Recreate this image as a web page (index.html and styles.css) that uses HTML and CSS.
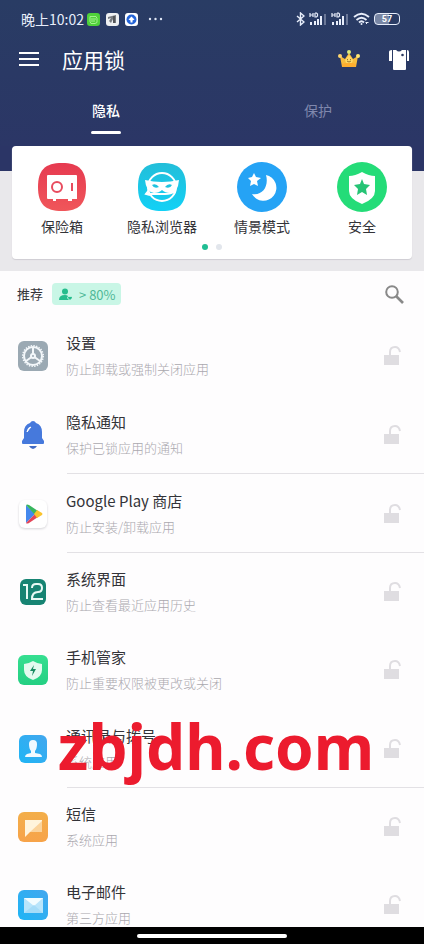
FILE: index.html
```html
<!DOCTYPE html>
<html lang="zh-CN">
<head>
  <meta charset="UTF-8" />
  <meta name="viewport" content="width=device-width, initial-scale=1.0"/>
  <title>应用锁</title>
  <link rel="stylesheet" href="styles.css">
</head>
<body>

  <header class="header">
    <div class="status-bar">
      <span class="time">晚上10:02</span>
      <div class="status-apps">
        <svg width="13" height="13" viewBox="0 0 13 13"><rect width="13" height="13" rx="3" fill="#4fd13a"/><path d="M3 3.500h6l1 2v4l-2 1H4l-1-2zM4 6h5M4 8h4" stroke="#a5f08f" fill="none"/></svg>
        <svg width="13" height="13" viewBox="0 0 13 13"><rect width="13" height="13" rx="3" fill="#eef0f2"/><path d="M2 4l8-2v8H7V6L5 10 3 8l2-3-3 1z" fill="#777b80"/><path d="M8 3v7" stroke="#333"/></svg>
        <svg width="13" height="13" viewBox="0 0 13 13"><rect width="13" height="13" rx="3" fill="#fff"/><circle cx="6.500" cy="6.500" r="5" fill="#2464d8"/><path d="M6.500 3.500l3 3-2 1v2h-2v-2l-2-1z" fill="#fff"/></svg>
      </div>
      <svg class="more" width="16" height="4" viewBox="0 0 16 4" fill="#dfe6f5"><circle cx="2" cy="2" r="1.200"/><circle cx="7.500" cy="2" r="1.200"/><circle cx="13" cy="2" r="1.200"/></svg>
      <div class="status-icons">
        <svg width="9" height="14" viewBox="0 0 9 14" fill="none" stroke="#e8eefb" stroke-width="1.400"><path d="M1 4l7 6-3.500 3V1L8 4l-7 6"/></svg>
        <svg width="18" height="14" viewBox="0 0 18 14"><g stroke="#e8eefb" stroke-width="1.200" fill="none"><path d="M1 1v4M1 3h3M4 1v4M6 1v4h1.500l1-1V2l-1-1H6"/></g><path d="M1 10h2v3H1zM5 9h2v4H5zM8 7h2v6H8zM11 4h2v9h-2z" fill="#e8eefb"/><path d="M15 2h2v11h-2z" fill="#6b7898"/></svg>
        <svg width="18" height="14" viewBox="0 0 18 14"><g stroke="#e8eefb" stroke-width="1.200" fill="none"><path d="M1 1v4M1 3h3M4 1v4M6 1v4h1.500l1-1V2l-1-1H6"/></g><path d="M1 10h2v3H1zM5 9h2v4H5zM8 7h2v6H8zM11 4h2v9h-2z" fill="#e8eefb"/><path d="M15 2h2v11h-2z" fill="#6b7898"/></svg>
        <svg width="17" height="14" viewBox="0 0 17 14" fill="none" stroke="#e8eefb" stroke-width="1.800"><path d="M1 5q7.500-6.500 15 0M3.500 8q5-4.500 10 0M6 10.500q2.500-2.500 5 0"/><circle cx="8.500" cy="12" r="1" fill="#e8eefb" stroke="none"/><path d="M13 12l2-2M12.500 10.500h3" stroke-width="1"/></svg>
        <span class="battery">57</span>
      </div>
    </div>

    <div class="toolbar">
      <button class="icon-btn" aria-label="菜单">
        <svg width="20" height="14" viewBox="0 0 20 14" stroke="#fff" stroke-width="2"><path d="M0 1h20M0 7h20M0 13h20"/></svg>
      </button>
      <h1>应用锁</h1>
      <button class="icon-btn" aria-label="高级版">
        <svg width="22" height="18" viewBox="0 0 22 18"><path d="M2 6l5 3 4-6 4 6 5-3-2 11H4z" fill="#f8bd3d"/><path d="M4 14q7-3 14 0l-.5 3h-13z" fill="#ffae2f"/><path d="M7 10l4-5 4 5-1 3H8z" fill="#ffd964"/><path d="M9 9l1 1M13 9l-1 1M9 11q2 2 4 0" stroke="#9a742e" fill="none"/><circle cx="11" cy="2" r="2" fill="#ddeb79"/><circle cx="2" cy="6" r="2" fill="#ffd66e"/><circle cx="20" cy="6" r="2" fill="#ffe873"/></svg>
      </button>
      <button class="icon-btn" aria-label="主题">
        <svg width="22" height="21" viewBox="0 0 22 21" fill="#fff"><path d="M5 1h3q3 3 6 0h4v19q0 1-1 1H6q-1 0-1-1zM1 3q0-2 3-2v11H1zM19 1q2 0 2 2v9h-2z"/><circle cx="14.500" cy="6" r="1.300" fill="#29375f"/></svg>
      </button>
    </div>

    <nav class="tabs">
      <button class="tab active">隐私</button>
      <button class="tab">保护</button>
    </nav>
  </header>

  <section class="features">
    <div class="card">
      <div class="feature-grid">
        <button class="feature">
          <svg width="50" height="50" viewBox="0 0 50 50"><defs><linearGradient id="red" x2="0" y2="1"><stop stop-color="#e63a50"/><stop offset="1" stop-color="#f0565a"/></linearGradient></defs><path d="M25 1C42 1 49 8 49 25S42 49 25 49 1 42 1 25 8 1 25 1z" fill="url(#red)"/><path d="M11 13h28q1 0 1 1v23h-5v2h-4v-2H19v2h-3v-2h-5q-1 0-1-1V14q0-1 1-1z" fill="#fff"/><circle cx="20" cy="25" r="5" fill="none" stroke="#e84b5e" stroke-width="2"/><path d="M35 21v8" stroke="#e84b5e" stroke-width="2"/></svg>
          <span>保险箱</span>
        </button>
        <button class="feature">
          <svg width="50" height="50" viewBox="0 0 50 50"><defs><linearGradient id="cyan" x2="0" y2="1"><stop stop-color="#23bed9"/><stop offset="1" stop-color="#12d1f6"/></linearGradient></defs><path d="M25 1C42 1 49 8 49 25S42 49 25 49 1 42 1 25 8 1 25 1z" fill="url(#cyan)"/><circle cx="25" cy="25" r="14" fill="none" stroke="#fff" stroke-width="2"/><path d="M8 18q17 4 34 0l-1 6q-2 6-8 7-5 0-8-3-3 3-8 3-8-1-9-13z" fill="#fff"/><path d="M15 23q4-2 7 2-5 2-7-2zM28 25q3-4 7-2-2 4-7 2z" fill="#20c2df"/><path d="M10 32h18q6 0 10-3M12 28l-3 4 4 1" fill="none" stroke="#fff" stroke-width="2"/></svg>
          <span>隐私浏览器</span>
        </button>
        <button class="feature">
          <svg width="50" height="50" viewBox="0 0 50 50"><circle cx="25" cy="25" r="25" fill="#25a3f5"/><path d="M29 13a13 13 0 1 1-14 19C26 34 32 24 29 13z" fill="#fff"/><path d="M17 11l2 4 5 1-4 3 1 5-4-2-4 2 1-5-3-3 4-1z" fill="#fff"/></svg>
          <span>情景模式</span>
        </button>
        <button class="feature">
          <svg width="50" height="50" viewBox="0 0 50 50"><circle cx="25" cy="25" r="25" fill="#24dc78"/><path d="M25 10q7 4 13 4v15q0 8-13 13-13-5-13-13V14q6 0 13-4z" fill="#fff"/><path d="M25 17l2 5 6 1-4 4 1 6-5-3-5 3 1-6-4-4 6-1z" fill="#26c475"/></svg>
          <span>安全</span>
        </button>
      </div>
      <div class="dots"><i class="dot on"></i><i class="dot"></i></div>
    </div>
  </section>

  <main>
    <div class="list-head">
      <h2>推荐</h2>
      <span class="badge">
        <svg width="14" height="13" viewBox="0 0 14 13" fill="#25bd8d"><circle cx="6" cy="3.500" r="3"/><path d="M0 12q0-5 6-5 2 0 3 1l-1 2 2 2z"/><path d="M11 12L9 10q0-2 2-1 2-1 2 1z"/></svg>
        &gt; 80%
      </span>
      <button class="icon-btn" aria-label="搜索">
        <svg width="19" height="19" viewBox="0 0 19 19" fill="none" stroke="#898989"><circle cx="7" cy="7" r="5.800" stroke-width="2"/><path d="M11 11l7 7" stroke-width="2.600"/></svg>
      </button>
    </div>

    <svg class="defs" width="0" height="0" aria-hidden="true">
      <symbol id="unlock" viewBox="0 0 18 20"><path d="M1 9h15v10H1z" fill="#dfdde1"/><path d="M7 9V6q0-5 5-5 4 0 5 5" fill="none" stroke="#dfdde1" stroke-width="2"/></symbol>
      <linearGradient id="green" x2="0" y2="1"><stop stop-color="#36df91"/><stop offset="1" stop-color="#24cf82"/></linearGradient>
      <linearGradient id="blue" x1="1" x2="0" y2="1"><stop stop-color="#43a7ee"/><stop offset="1" stop-color="#1fb5f5"/></linearGradient>
      <linearGradient id="orange" x2="0" y2="1"><stop stop-color="#f3ae4a"/><stop offset="1" stop-color="#f7a349"/></linearGradient>
    </svg>

    <ul class="app-list">
      <li class="app">
        <svg width="30" height="30" viewBox="0 0 30 30"><rect width="30" height="30" rx="6" fill="#9ba9b3"/><circle cx="15" cy="15" r="10.300" fill="none" stroke="#f3f7fa" stroke-width="1.500" stroke-dasharray="1.400 1.300"/><circle cx="15" cy="15" r="9" fill="none" stroke="#f3f7fa" stroke-width="2"/><path d="M15 15V6M15 15l-7 5M15 15l7 5" stroke="#f3f7fa" stroke-width="2"/><circle cx="15" cy="15" r="3" fill="#f3f7fa"/><circle cx="15" cy="15" r="1" fill="#9ba9b3"/></svg>
        <div class="info"><h3>设置</h3><p>防止卸载或强制关闭应用</p></div>
        <button class="icon-btn" aria-label="锁定设置"><svg width="18" height="20"><use href="#unlock"/></svg></button>
      </li>
      <li class="app line">
        <svg width="30" height="30" viewBox="0 0 30 30"><path d="M15 1q2 0 3 2 6 2 6 9v6l2 3v2q0 1-1 1H5q-1 0-1-1v-2l2-3v-6q0-7 6-9 1-2 3-2z" fill="#4679dc"/><path d="M11 26h8q-2 3-4 3t-4-3z" fill="#426bc4"/><path d="M9 12q1-5 4-5-2 2-4 5z" fill="#fff" stroke="#fff"/></svg>
        <div class="info"><h3>隐私通知</h3><p>保护已锁应用的通知</p></div>
        <button class="icon-btn" aria-label="锁定隐私通知"><svg width="18" height="20"><use href="#unlock"/></svg></button>
      </li>
      <li class="app line">
        <svg class="play" width="30" height="30" viewBox="0 0 30 30"><rect x="1" y="1" width="28" height="28" rx="6" fill="#fff"/><path d="M8 6v18l9-9z" fill="#4589ed"/><path d="M8 6q1-1 3 0l9 6-3 4z" fill="#38b65d"/><path d="M8 24q1 1 3 0l9-6-3-3z" fill="#e54558"/><path d="M19 11l5 3q1 1 0 2l-5 3-3-4z" fill="#fac32d"/></svg>
        <div class="info"><h3>Google Play 商店</h3><p>防止安装/卸载应用</p></div>
        <button class="icon-btn" aria-label="锁定 Google Play 商店"><svg width="18" height="20"><use href="#unlock"/></svg></button>
      </li>
      <li class="app">
        <svg width="30" height="30" viewBox="0 0 30 30"><rect x="2" y="2" width="26" height="26" rx="6" fill="#178473"/><path d="M5 8h4v14M14 11q0-4 4-4h2q4 0 4 4t-4 4q-6 0-6 7h11" fill="none" stroke="#e8faf5" stroke-width="2"/></svg>
        <div class="info"><h3>系统界面</h3><p>防止查看最近应用历史</p></div>
        <button class="icon-btn" aria-label="锁定系统界面"><svg width="18" height="20"><use href="#unlock"/></svg></button>
      </li>
      <li class="app">
        <svg width="30" height="30" viewBox="0 0 30 30"><rect width="30" height="30" rx="6" fill="url(#green)"/><path d="M15 6q5 3 9 3v6q0 7-9 10-9-3-9-10V9q4 0 9-3z" fill="#e3faef"/><path d="M16 10l-4 6h3l-1 5 4-7h-3z" fill="#168a60"/></svg>
        <div class="info"><h3>手机管家</h3><p>防止重要权限被更改或关闭</p></div>
        <button class="icon-btn" aria-label="锁定手机管家"><svg width="18" height="20"><use href="#unlock"/></svg></button>
      </li>
      <li class="app line">
        <svg width="30" height="30" viewBox="0 0 30 30"><rect x="1" y="1" width="28" height="28" rx="6" fill="url(#blue)"/><path d="M15 6q4 0 4 4 0 5-2 7v2l5 1q2 1 2 3H7q0-2 2-3l4-1v-2q-2-2-2-7 0-4 4-4z" fill="#f2faff"/></svg>
        <div class="info"><h3>通讯录与拨号</h3><p>系统应用</p></div>
        <button class="icon-btn" aria-label="锁定通讯录与拨号"><svg width="18" height="20"><use href="#unlock"/></svg></button>
      </li>
      <li class="app">
        <svg width="30" height="30" viewBox="0 0 30 30"><rect width="30" height="30" rx="6" fill="url(#orange)"/><path d="M7 8h17v12H12l-5 5z" fill="#fff4dc"/><path d="M24 9v11H12z" fill="#fbd39b"/></svg>
        <div class="info"><h3>短信</h3><p>系统应用</p></div>
        <button class="icon-btn" aria-label="锁定短信"><svg width="18" height="20"><use href="#unlock"/></svg></button>
      </li>
      <li class="app">
        <svg width="30" height="30" viewBox="0 0 30 30"><rect width="30" height="30" rx="6" fill="url(#blue)"/><path d="M6 8h19v15H6z" fill="#b9e5fb"/><path d="M6 8h19l-9 8z" fill="#f2fcff"/><path d="M6 23l10-8 9 8z" fill="#a5dcf8"/></svg>
        <div class="info"><h3>电子邮件</h3><p>第三方应用</p></div>
        <button class="icon-btn" aria-label="锁定电子邮件"><svg width="18" height="20"><use href="#unlock"/></svg></button>
      </li>
    </ul>
  </main>

  <div class="watermark">zbjdh.com</div>
  <div class="nav-bar"><span></span></div>

</body>
</html>
```
FILE: styles.css
```css
* {
  box-sizing: border-box;
}

body {
  position: relative;
  margin: 0;
  background: #fefdfe;
  color: #333338;
  font-family: "Noto Sans CJK SC", sans-serif;
}

h1, h2, h3, p, ul {
  margin: 0;
  padding: 0;
  font-weight: 400;
}

button {
  background: none;
  border: none;
  padding: 0;
  font-family: inherit;
  color: inherit;
  cursor: pointer;
}

svg {
  display: block;
  flex-shrink: 0;
}

.defs {
  position: absolute;
}

/* header */
.header {
  background: linear-gradient(#293c64, #2b3666);
  color: #fff;
}

.status-bar {
  display: flex;
  align-items: center;
  height: 38px;
  padding: 0 24px 0 21px;
}

.time {
  font-size: 14px;
  line-height: 20px;
  color: #e8eefb;
}

.status-apps {
  display: flex;
  gap: 6px;
  margin-left: 3px;
}

.more {
  margin-left: 10px;
}

.status-icons {
  display: flex;
  align-items: center;
  gap: 4px;
  margin-left: auto;
}

.battery {
  width: 26px;
  height: 12px;
  border: 1px solid #e8eefb;
  border-radius: 4px;
  background: linear-gradient(90deg, #7886a4 57%, transparent 57%);
  font: bold 9px/10px Roboto, sans-serif;
  text-align: center;
}

.toolbar {
  display: flex;
  align-items: center;
  height: 42px;
  padding: 0 14px 0 19px;
}

.toolbar h1 {
  flex: 1;
  margin-left: 23px;
  font-size: 21px;
  line-height: 30px;
}

.toolbar h1 + .icon-btn {
  margin-right: 28px;
}

.tabs {
  display: flex;
  height: 66px;
}

.tab {
  flex: 1;
  display: flex;
  flex-direction: column;
  align-items: center;
  padding-top: 20px;
  font-size: 14px;
  line-height: 20px;
  color: #8088ad;
}

.tab.active {
  color: #fff;
  font-weight: 500;
}

.tab.active::after {
  content: "";
  width: 30px;
  height: 3px;
  margin-top: 11px;
  border-radius: 2px;
  background: #fff;
}

/* feature card */
.features {
  padding: 0 12px 12px;
  background: linear-gradient(#2b3566 25px, #e9e8eb 25px);
}

.card {
  padding: 16px 0 9px;
  background: #fff;
  border-radius: 4px;
  box-shadow: 0 1px 1px #cfcdd3;
}

.feature-grid {
  display: grid;
  grid-template-columns: repeat(4, 1fr);
}

.feature {
  display: flex;
  flex-direction: column;
  align-items: center;
  gap: 4px;
  font-size: 14px;
  line-height: 20px;
  white-space: nowrap;
}

.dots {
  display: flex;
  justify-content: center;
  gap: 8px;
  margin-top: 8px;
}

.dot {
  width: 6px;
  height: 6px;
  border-radius: 50%;
  background: #e2e6ec;
}

.dot.on {
  background: #20be93;
}

/* app list */
.list-head {
  display: flex;
  align-items: center;
  height: 46px;
  padding: 0 20px 0 17px;
}

.list-head h2 {
  font-size: 13px;
  line-height: 20px;
}

.list-head .icon-btn {
  margin-left: auto;
}

.badge {
  display: flex;
  align-items: center;
  gap: 6px;
  height: 22px;
  margin-left: 9px;
  padding: 0 5px 0 7px;
  border-radius: 4px;
  background: #c9f6e6;
  color: #4fb897;
  font-size: 13px;
}

.app-list {
  list-style: none;
}

.app {
  position: relative;
  display: flex;
  align-items: center;
  height: 78px;
  padding: 0 23px 0 18px;
}

.app.line {
  height: 79px;
}

.app.line::after {
  content: "";
  position: absolute;
  left: 67px;
  right: 0;
  bottom: 0;
  height: 1px;
  background: #e3e1e5;
}

.play {
  filter: drop-shadow(0 1px 1px #d5d5d8);
}

.info {
  flex: 1;
  margin-left: 18px;
}

.info h3 {
  font-size: 15px;
  line-height: 24px;
}

.info p {
  margin-top: 2px;
  font-size: 13px;
  line-height: 24px;
  font-weight: 300;
  color: #aaa8ae;
}

/* overlays */
.watermark {
  position: absolute;
  top: 704px;
  left: 0;
  right: 0;
  padding-left: 8px;
  text-align: center;
  font: bold 62px/84px "Noto Sans", sans-serif;
  color: #ec1b2e;
  pointer-events: none;
}

.nav-bar {
  position: fixed;
  left: 0;
  right: 0;
  bottom: 0;
  display: flex;
  justify-content: center;
  height: 17px;
  padding-top: 7px;
  background: #000;
}

.nav-bar span {
  width: 150px;
  height: 4px;
  border-radius: 2px;
  background: #fff;
}
```
